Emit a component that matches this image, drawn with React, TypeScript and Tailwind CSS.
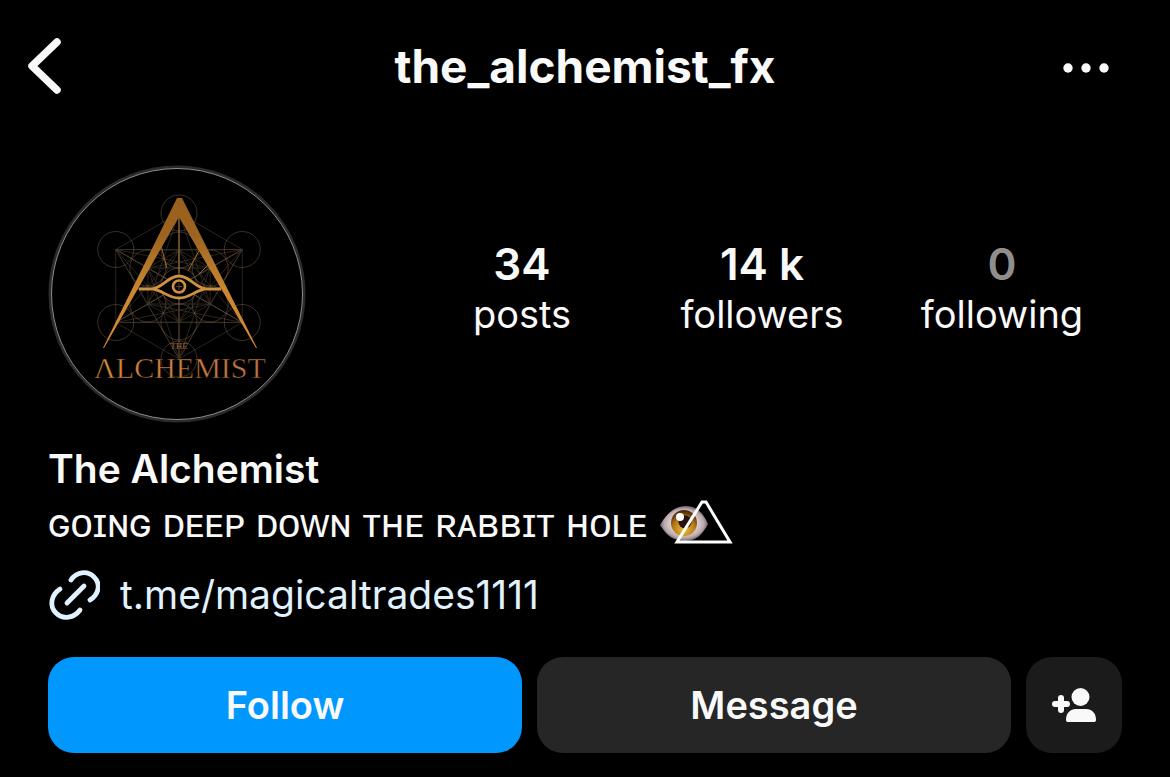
import { useState } from 'react'

const CX = 131
const CY = 121

// centres of the thirteen circles: the middle one, six inner and six outer
const nodes: [number, number][] = [[CX, CY]]
for (const r of [36, 73]) {
  for (let i = 0; i < 6; i++) {
    const a = (Math.PI / 3) * i - Math.PI / 2
    nodes.push([CX + r * Math.cos(a), CY + r * Math.sin(a)])
  }
}

const links = nodes.flatMap((a, i) => nodes.slice(i + 1).map((b) => [a, b]))

const stats = [
  { label: 'posts', value: '34', muted: false },
  { label: 'followers', value: '14 k', muted: false },
  { label: 'following', value: '0', muted: true },
]

function Avatar() {
  return (
    <svg viewBox="0 0 258 258" className="size-[258px] shrink-0" role="img" aria-label="The Alchemist">
      <defs>
        <linearGradient id="gold" x1="0" y1="0" x2="0" y2="1">
          <stop offset="0" stopColor="#9a5f1c" />
          <stop offset="0.25" stopColor="#9c6420" />
          <stop offset="0.6" stopColor="#c98632" />
          <stop offset="1" stopColor="#d98a36" />
        </linearGradient>
        <linearGradient id="copper" x1="0" y1="0" x2="1" y2="0">
          <stop offset="0" stopColor="#d88838" />
          <stop offset="1" stopColor="#ba7246" />
        </linearGradient>
      </defs>
      <circle cx="129" cy="129" r="127" fill="#000" stroke="#2b2b2b" strokeWidth="3" />
      <circle cx="129" cy="129" r="125.5" fill="none" stroke="#8c8c8c" strokeWidth="1" />
      <g fill="none" stroke="#a08468">
        <g opacity="0.4" strokeWidth="0.9">
          {nodes.map(([x, y], i) => (
            <circle key={i} cx={x} cy={y} r="18" />
          ))}
        </g>
        <g opacity="0.42" strokeWidth="0.65">
          {links.map(([a, b], i) => (
            <line key={i} x1={a[0]} y1={a[1]} x2={b[0]} y2={b[1]} />
          ))}
        </g>
      </g>
      <g stroke="#a06a2c" strokeWidth="1">
        <path d="M131 52v56M112 77l7 26M152 84l-12 22M161 99l-10 10" />
      </g>
      <path d="M129 33h5l75 150h-1L131 52 56 183h-1z" fill="url(#gold)" />
      <path d="M131 111c-11 0-15 10-25 13 10 2 14 9 25 9s15-7 25-9c-10-3-14-13-25-13z" fill="#000" />
      <g fill="none" stroke="#cf9140" strokeWidth="2.8">
        <path d="M91 124h11c13 0 17-13 29-13s16 13 29 13h13" />
        <path d="M105 124c11 2 15 9 26 9s15-7 26-9" />
        <circle cx="131" cy="121.500" r="6" strokeWidth="2.6" />
      </g>
      <path d="M131 118v7M128 121.500h6" stroke="#5c4020" strokeWidth="1" />
      <text x="131" y="184" textAnchor="middle" fontFamily="Liberation Serif, serif" fontSize="9" fill="#a0683a">
        THE
      </text>
      <text x="132" y="213" textAnchor="middle" fontFamily="Liberation Serif, serif" fontSize="30" fill="url(#copper)" stroke="#000" strokeWidth="0.5">
        ΛLCHEMIST
      </text>
    </svg>
  )
}

function EyeTriangle() {
  return (
    <svg viewBox="0 0 74 46" className="h-[46px] w-[74px] shrink-0" aria-hidden="true">
      <defs>
        <radialGradient id="white" cx="0.5" cy="0.5" r="0.55">
          <stop offset="0.4" stopColor="#e9dfe0" />
          <stop offset="0.75" stopColor="#b9a9ad" />
          <stop offset="1" stopColor="#43353a" />
        </radialGradient>
        <radialGradient id="iris" cx="0.5" cy="0.75" r="0.7">
          <stop offset="0" stopColor="#f0c02c" />
          <stop offset="0.6" stopColor="#b57a1c" />
          <stop offset="1" stopColor="#4d2b0c" />
        </radialGradient>
      </defs>
      <path d="M1 25C8 13 16 6 27 6c12 0 18 9 22 18-6 11-12 17-23 17C15 41 8 36 1 25z" fill="url(#white)" />
      <circle cx="25" cy="23" r="13" fill="url(#iris)" />
      <circle cx="26" cy="22" r="6.5" fill="#26120c" />
      <circle cx="21" cy="17" r="4" fill="#fff" />
      <path d="M43 2h4l24 40H18z" fill="none" stroke="#fff" strokeWidth="3" />
    </svg>
  )
}

export default function App() {
  const [following, setFollowing] = useState(false)

  return (
    <div className="min-h-screen bg-black font-['Inter',sans-serif] text-[#f9f9f9]">
      <header className="grid grid-cols-[1fr_auto_1fr] items-center px-6 pt-9">
        <button aria-label="Back" className="justify-self-start">
          <svg viewBox="0 0 40 60" className="h-[60px] w-10" fill="none" stroke="currentColor" strokeWidth="7.5" strokeLinecap="round" strokeLinejoin="round">
            <path d="M33 6 8 30l25 24" />
          </svg>
        </button>
        <h1 className="text-[46px] leading-[60px] font-bold">the_alchemist_fx</h1>
        <button aria-label="More options" className="mr-9 justify-self-end">
          <svg viewBox="0 0 48 16" className="h-4 w-12" fill="currentColor">
            <circle cx="6" cy="10" r="4.7" />
            <circle cx="24" cy="10" r="4.7" />
            <circle cx="42" cy="10" r="4.7" />
          </svg>
        </button>
      </header>

      <main className="px-12 pt-[69px] pb-6">
        <section className="flex items-center">
          <Avatar />
          <dl className="ml-24 grid flex-1 grid-cols-3 pb-2.5 text-center">
            {stats.map((s) => (
              <div key={s.label} className="flex flex-col-reverse">
                <dt className="text-[38px] leading-[50px]">{s.label}</dt>
                <dd className={s.muted ? 'text-[44px] leading-[50px] font-semibold text-[#8e8e8e]' : 'text-[44px] leading-[50px] font-semibold'}>
                  {s.value}
                </dd>
              </div>
            ))}
          </dl>
        </section>

        <section className="mt-5">
          <h2 className="text-[39px] leading-[52px] font-semibold">The Alchemist</h2>
          <p className="flex items-center gap-3 text-[40px] leading-[56px]">
            ɢᴏɪɴɢ ᴅᴇᴇᴘ ᴅᴏᴡɴ ᴛʜᴇ ʀᴀʙʙɪᴛ ʜᴏʟᴇ
            <EyeTriangle />
          </p>
          <a href="https://t.me/magicaltrades1111" className="mt-3.5 flex items-center gap-5 text-[39px] leading-[60px] text-[#e0f1ff]">
            <svg viewBox="0 0 52 52" className="size-[52px]" fill="none" stroke="currentColor" strokeWidth="4.8" strokeLinecap="round">
              <path d="M23 11C28 3 39 1 46 8s5 17-4 23" />
              <path d="M12 20C3 26 1 37 8 44s18 5 24-3" />
              <path d="M19 34 36 17" />
            </svg>
            t.me/magicaltrades1111
          </a>
        </section>

        <div className="mt-8 flex gap-[15px] text-[38px] font-semibold">
          <button onClick={() => setFollowing(!following)} className="h-24 flex-1 rounded-[26px] bg-[#0098ff]">
            {following ? 'Following' : 'Follow'}
          </button>
          <button className="h-24 flex-1 rounded-[26px] bg-[#262626]">Message</button>
          <button aria-label="Suggested accounts" className="flex size-24 items-center justify-center rounded-[26px] bg-[#1b1b1b]">
            <svg viewBox="0 0 44 34" className="h-[34px] w-11" fill="currentColor">
              <circle cx="28.5" cy="9" r="9" />
              <path d="M14 32c0-7 4-11 10-11h10c6 0 10 4 10 11 0 1.5-1 2-2 2H16c-1 0-2-.5-2-2z" />
              <path d="M9 10v12M3 16h12" stroke="currentColor" strokeWidth="6" strokeLinecap="round" />
            </svg>
          </button>
        </div>
      </main>
    </div>
  )
}
